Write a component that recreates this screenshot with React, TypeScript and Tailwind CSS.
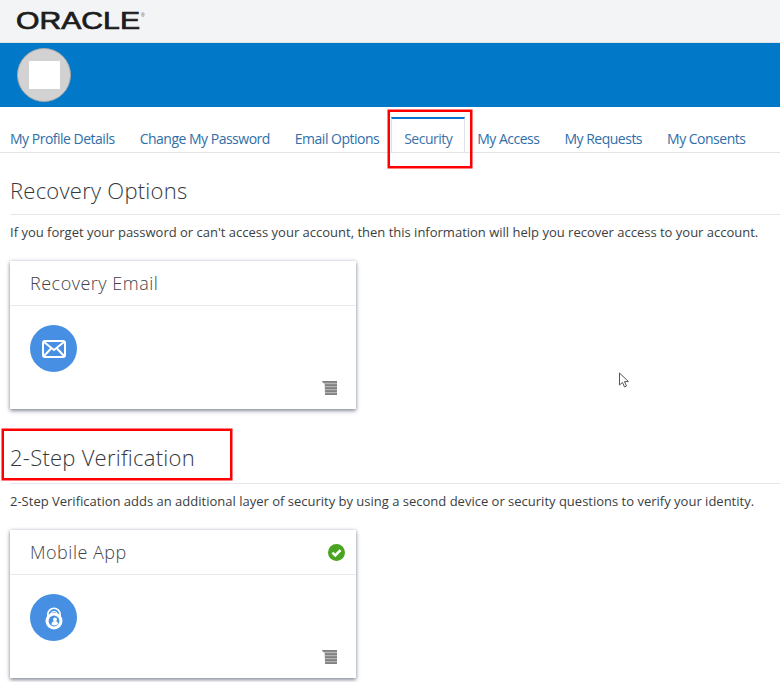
import React from "react";

const font = "font-['Open_Sans','Noto_Sans',sans-serif]";

function Tab({ label, active }: { label: string; active?: boolean }) {
  if (active) {
    return (
      <div className="-mx-[13px] h-[35px] w-[74px] shrink-0 border-x border-x-[#dfe4ea] border-t-2 border-t-[#0572ce] bg-white pt-[10px] text-center text-[14px] leading-[20px] tracking-[-0.5px] text-[#3a74ab]">
        {label}
      </div>
    );
  }
  return <div className="shrink-0 pb-[3px] text-[14px] leading-[20px] tracking-[-0.5px] text-[#2f6ea9]">{label}</div>;
}

function MenuIcon() {
  return (
    <svg width="15" height="14" viewBox="0 0 15 14" className="block" aria-hidden="true">
      <path d="M0 0h15v2.5H1.5zM2.5 2.5H15V14H3z" fill="#b4b4b4" />
      <path d="M0 0h15v1.8H1zM3 3.2h12V5H3zM3 6.2h12V8H3zM3 9.2h12V11H3zM3 12.2h12V14H3z" fill="#808080" />
    </svg>
  );
}

function Card({ title, icon, check }: { title: string; icon: React.ReactNode; check?: boolean }) {
  return (
    <div className="h-[148px] w-[346px] bg-white shadow-[0_2px_4px_rgba(60,70,85,0.55),0_0_3px_rgba(90,110,140,0.3)]">
      <div className="flex h-[45px] items-center justify-between border-b border-[#e6ebf0] pl-[20px] pr-[11px]">
        <span className="text-[18px] font-light leading-[24px] tracking-[0.5px] text-[#3f444a]">{title}</span>
        {check && (
          <svg width="17" height="17" viewBox="0 0 17 17" aria-hidden="true">
            <circle cx="8.5" cy="8.5" r="8.5" fill="#4aa421" />
            <path d="M4.4 8.6l2.9 2.9 5.2-5.4" fill="none" stroke="#fff" strokeWidth="2.6" />
          </svg>
        )}
      </div>
      <div className="flex items-start justify-between pl-[20px] pr-[19px]">
        <div className="mt-[19px] flex h-[47px] w-[47px] items-center justify-center rounded-full bg-[#468fe3]">{icon}</div>
        <div className="mt-[75px]"><MenuIcon /></div>
      </div>
    </div>
  );
}

function Section({ title, desc, children, titleClass }: { title: string; desc: string; children: React.ReactNode; titleClass: string }) {
  return (
    <section>
      <h2 className={`border-b border-[#e4e8ec] ${titleClass} text-[22px] font-light leading-[30px] tracking-[0.25px] text-[#33383d]`}>{title}</h2>
      <p className="mt-[8px] whitespace-nowrap text-[13px] leading-[18px] tracking-[0px] text-[#3a3e42]">{desc}</p>
      <div className="mt-[20px]">{children}</div>
    </section>
  );
}

export default function App() {
  return (
    <div className={`relative h-[682px] w-[780px] overflow-hidden bg-white ${font}`}>
      <header className="flex h-[43px] items-center border-b border-[#dfe2e6] bg-[#f3f4f6] pl-[16px]">
        <svg width="132" height="28" viewBox="0 0 132 28" aria-label="Oracle logo">
          <text x="0" y="22" fontFamily="Liberation Sans, sans-serif" fontSize="23" fontWeight="400" fill="#1c1c1c" stroke="#1c1c1c" strokeWidth="0.7" textLength="124" lengthAdjust="spacingAndGlyphs">ORACLE</text>
          <text x="125" y="10" fontFamily="Liberation Sans, sans-serif" fontSize="5" fill="#555">®</text>
        </svg>
      </header>
      <div className="flex h-[64px] items-center bg-[#0178c8] pl-[17px]">
        <div className="flex h-[54px] w-[54px] items-center justify-center rounded-full border border-[#a9a9a9] bg-[#d2d2d2]">
          <div className="h-[28px] w-[31px] bg-white" />
        </div>
      </div>
      <nav className="flex h-[46px] items-end gap-[25px] border-b border-[#e2e5e8] pl-[10px]">
        <Tab label="My Profile Details" />
        <Tab label="Change My Password" />
        <Tab label="Email Options" />
        <Tab label="Security" active />
        <Tab label="My Access" />
        <Tab label="My Requests" />
        <Tab label="My Consents" />
      </nav>
      <main className="pl-[10px] pr-0">
        <div className="pt-[22px]">
          <Section
            title="Recovery Options"
            titleClass="pb-[9px]"
            desc="If you forget your password or can't access your account, then this information will help you recover access to your account."
          >
            <Card
              title="Recovery Email"
              icon={
                <svg width="24" height="18" viewBox="0 0 24 18" fill="none" stroke="#fff" strokeWidth="2" aria-hidden="true">
                  <rect x="1" y="1" width="22" height="16" rx="2" />
                  <path d="M2 2l10 8 10-8M2 16l7-7.5M22 16l-7-7.5" />
                </svg>
              }
            />
          </Section>
        </div>
        <div className="pt-[33px]">
          <Section
            title="2-Step Verification"
            titleClass="pb-[11px]"
            desc="2-Step Verification adds an additional layer of security by using a second device or security questions to verify your identity."
          >
            <Card
              title="Mobile App"
              check
              icon={
                <svg width="18" height="24" viewBox="0 0 18 24" aria-hidden="true">
                  <path d="M2.8 12V8.5a6.2 6.2 0 0 1 12.4 0V12" fill="none" stroke="#fff" strokeWidth="1.6" />
                  <path d="M5.8 10V8.5a3.2 3.2 0 0 1 6.4 0V10" fill="none" stroke="#fff" strokeWidth="1" />
                  <circle cx="9" cy="15" r="8.5" fill="#fff" />
                  <circle cx="9" cy="15" r="5.4" fill="#468fe3" />
                  <circle cx="10" cy="13.4" r="1.9" fill="#fff" />
                  <path d="M6.4 18.5c.4-2.4 1.7-3.4 3.6-3.4s2.7 1 3 2.6c-1.4 1.8-4.4 2.4-6.6.8z" fill="#fff" />
                </svg>
              }
            />
          </Section>
        </div>
      </main>
      <div className="absolute left-[388px] top-[110px] h-[58px] w-[84px] border-2 border-[#ff0000] shadow-[0_0_0_0.5px_#ff0000]" />
      <div className="absolute left-[2px] top-[429px] h-[51px] w-[230px] border-2 border-[#ff0000] shadow-[0_0_0_0.5px_#ff0000]" />
      <svg className="absolute left-[618px] top-[372px]" width="12" height="17" viewBox="0 0 12 17" aria-hidden="true">
        <path d="M1.5 1v12l3-2.6 2 4.6 2-.9-2-4.5h4z" fill="#fff" stroke="#555" strokeWidth="1" />
      </svg>
    </div>
  );
}
